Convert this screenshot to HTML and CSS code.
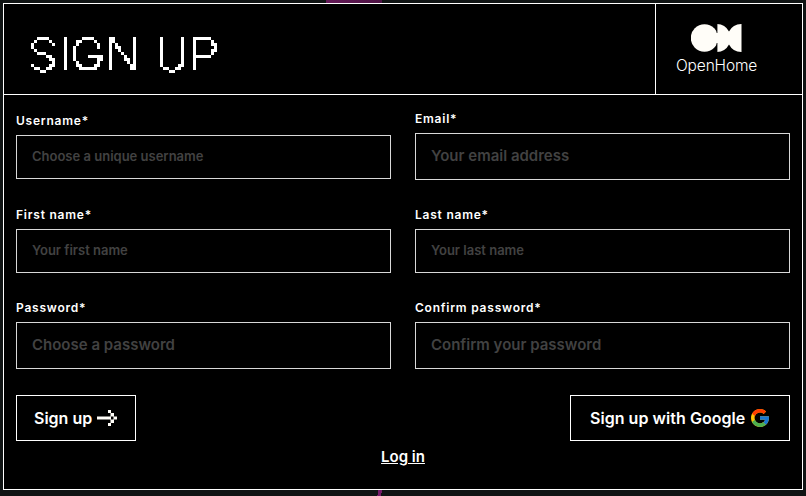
FILE: index.html
```html
<!DOCTYPE html>
<html lang="en">
<head>
<meta charset="utf-8">
<title>Sign up</title>
<link rel="stylesheet" href="styles.css">
</head>
<body>
<svg class="defs" width="0" height="0" aria-hidden="true">
  <filter id="pixel" x="0" y="0" width="100%" height="100%" primitiveUnits="userSpaceOnUse">
    <feFlood x="1" y="1" width="1" height="1" flood-color="#fff" result="dot"/>
    <feOffset in="dot" x="0" y="0" width="3" height="3"/>
    <feTile x="0" y="0" width="240" height="90"/>
    <feComposite in="SourceGraphic" operator="in" x="0" y="0" width="240" height="90"/>
    <feComponentTransfer><feFuncA type="discrete" tableValues="0 1"/></feComponentTransfer>
    <feMorphology operator="dilate" radius="1"/>
  </filter>
</svg>
<form class="card">
  <header class="head">
    <h1 class="title">S<span class="i">I</span>GN <span class="u">U</span>P</h1>
    <div class="brand">
      <svg class="mark" width="51" height="28" viewBox="0 0 51 28" fill="#fffdf8"><circle cx="13.500" cy="14" r="13.700"/><path d="M26 0A14 14 0 0 1 38 7.500A14 14 0 0 1 50.500 0V28A14 14 0 0 1 38 20.500A14 14 0 0 1 26 28Z"/><path d="M26 0V9M26 19V28" stroke="#000" stroke-width="0.800"/></svg>
      <span class="name">OpenHome</span>
    </div>
  </header>
  <div class="grid">
    <label class="field"><span>Username*</span><input placeholder="Choose a unique username"></label>
    <label class="field large"><span>Email*</span><input placeholder="Your email address"></label>
    <label class="field"><span>First name*</span><input placeholder="Your first name"></label>
    <label class="field"><span>Last name*</span><input placeholder="Your last name"></label>
    <label class="field large"><span>Password*</span><input placeholder="Choose a password"></label>
    <label class="field large"><span>Confirm password*</span><input placeholder="Confirm your password"></label>
  </div>
  <div class="actions">
    <button type="button" class="btn signup"><span>Sign up</span>
      <svg width="20" height="16" viewBox="0 0 20 16" fill="#fffdf8"><path d="M0 6.500H14V9.500H0ZM11 0H14V3H11ZM13.500 3H17V6.500H13.500ZM16.500 6.500H20V9.500H16.500ZM13.500 9.500H17V13H13.500ZM11 13H14V16H11Z"/></svg>
    </button>
    <button type="button" class="btn google"><span>Sign up with Google</span>
      <svg width="18" height="18" viewBox="4 4 40 40"><path fill="#FFC107" d="M43.611 20.083H42V20H24v8h11.303C33.654 32.657 29.223 36 24 36c-6.627 0-12-5.373-12-12s5.373-12 12-12c3.059 0 5.842 1.154 7.961 3.039l5.657-5.657C34.046 6.053 29.268 4 24 4 12.955 4 4 12.955 4 24s8.955 20 20 20 20-8.955 20-20c0-1.341-.138-2.650-.389-3.917z"/><path fill="#FF3D00" d="M6.306 14.691l6.571 4.819C14.655 15.108 18.961 12 24 12c3.059 0 5.842 1.154 7.961 3.039l5.657-5.657C34.046 6.053 29.268 4 24 4 16.318 4 9.656 8.337 6.306 14.691z"/><path fill="#4CAF50" d="M24 44c5.166 0 9.860-1.977 13.409-5.192l-6.190-5.238C29.211 35.091 26.715 36 24 36c-5.202 0-9.619-3.317-11.283-7.946l-6.522 5.025C9.505 39.556 16.227 44 24 44z"/><path fill="#1976D2" d="M43.611 20.083H42V20H24v8h11.303c-.792 2.237-2.231 4.166-4.087 5.571l6.193 5.238C36.971 39.205 44 34 44 24c0-1.341-.138-2.650-.389-3.917z"/></svg>
    </button>
  </div>
  <a class="login" href="#">Log in</a>
</form>
</body>
</html>
```
FILE: styles.css
```css
* { box-sizing: border-box; }
body {
  margin: 0;
  height: 496px;
  padding: 3px;
  overflow: hidden;
  font-family: Inter, sans-serif;
  color: #fff;
  background:
    linear-gradient(90deg, #641957, #4d1243) 326px 0 / 56px 3px no-repeat,
    linear-gradient(100deg, transparent 30%, #751b69 30% 75%, transparent 75%) 376px 490px / 7px 6px no-repeat,
    #101414;
}
.defs { position: absolute; }
.card {
  width: 800px;
  height: 487px;
  border: 1px solid #fff;
  background: #000;
  display: flex;
  flex-direction: column;
}
.head {
  display: flex;
  height: 91px;
  border-bottom: 1px solid #fff;
}
.title {
  flex: 1;
  margin: 0;
  padding-left: 24px;
  font-size: 47px;
  font-weight: 300;
  line-height: 99px;
  white-space: nowrap;
  filter: url(#pixel);
}
.title .i { margin: 0 -1px 0 1px; }
.title .u { margin: 0 0.700px 0 0.800px; font-size: 46px; }
.brand {
  width: 147px;
  border-left: 1px solid #fff;
  padding: 20px 0 0 20px;
  display: flex;
  flex-direction: column;
}
.mark { margin-left: 15px; }
.name {
  margin-top: 4px;
  font-size: 15.500px;
  line-height: 20px;
  font-weight: 300;
  letter-spacing: -0.150px;
}
.grid {
  display: grid;
  grid-template-columns: 375px 375px;
  column-gap: 24px;
  row-gap: 26px;
  padding: 15px 12px 0;
  align-items: center;
}
.field { display: flex; flex-direction: column; }
.field span {
  padding-top: 1px;
  font-size: 12px;
  line-height: 16px;
  font-weight: 600;
  letter-spacing: 0.770px;
  margin-bottom: 6px;
}
.field input {
  width: 100%;
  height: 44px;
  border: 1px solid #d8d8d8;
  background: #000;
  color: #fff;
  padding: 0 15px 2px;
  font: 600 13px Inter, sans-serif;
  border-radius: 0;
  outline: 0;
}
.large input { height: 47px; font-size: 15px; }
.field input::placeholder { color: #424242; opacity: 1; }
.actions {
  display: flex;
  justify-content: space-between;
  padding: 26px 12px 0;
}
.btn {
  height: 46px;
  display: flex;
  align-items: center;
  border: 1px solid #fff;
  border-radius: 0;
  background: #000;
  color: #fff;
  padding: 0 0 0 17px;
  gap: 6px;
  font: 600 16px Inter, sans-serif;
}
.signup { width: 120px; gap: 5px; }
.google { width: 220px; padding-left: 19px; letter-spacing: 0.040px; }
.login {
  align-self: center;
  margin-top: 6px;
  font-size: 15px;
  font-weight: 600;
  line-height: 20px;
  color: #fff;
}
```
